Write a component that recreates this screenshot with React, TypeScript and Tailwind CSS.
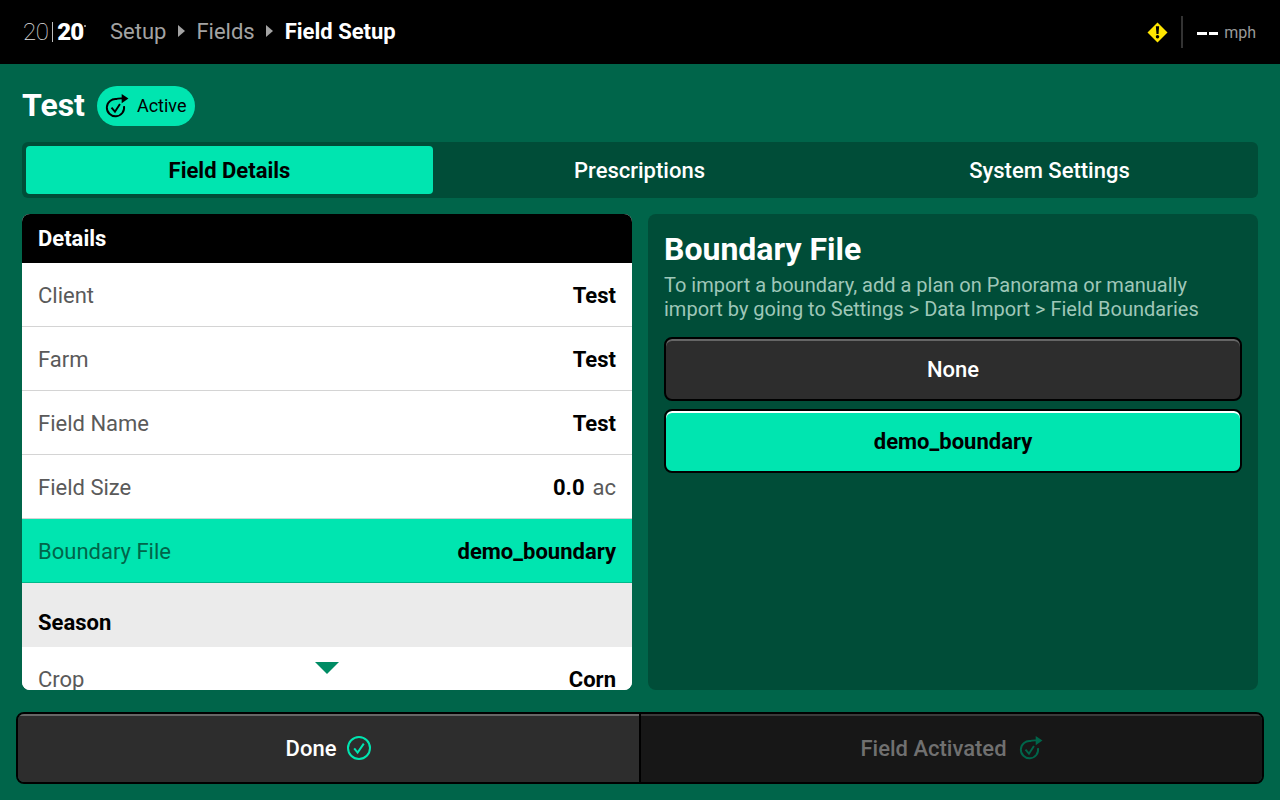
import type { ReactNode } from 'react';

function ActivateIcon({ className }: { className?: string }) {
	return (
		<svg viewBox="0 0 26 26" fill="none" className={className}>
			<path
				d="M20.800 12.600a9 9 0 1 1-7.400-7.300"
				stroke="currentColor"
				strokeWidth="2"
				fill="none"
			/>
			<path d="M12 5.300c2-.7 4.600-.8 7.400-.7" stroke="currentColor" strokeWidth="2" />
			<path d="M18.400 0l7 4.800-7 4.800z" fill="currentColor" />
			<path d="M7.800 14.200l3.600 4.200 5.200-8" stroke="currentColor" strokeWidth="2" />
		</svg>
	);
}

function CheckCircle({ className }: { className?: string }) {
	return (
		<svg viewBox="0 0 24 24" fill="none" className={className}>
			<circle cx="12" cy="12" r="11" stroke="currentColor" strokeWidth="2" />
			<path d="M7.200 12.400l3.400 4.200 6.200-9" stroke="currentColor" strokeWidth="2" />
		</svg>
	);
}

function Crumb({ children }: { children: ReactNode }) {
	return <span className="text-[22px] text-[#a3a3a3]">{children}</span>;
}

function CrumbArrow() {
	return <span className="mx-[11.5px] h-0 w-0 border-y-[6px] border-l-[7px] border-y-transparent border-l-[#a3a3a3]" />;
}

function Row({ label, value, unit, active }: { label: string; value: string; unit?: string; active?: boolean }) {
	return (
		<div
			className={
				active
					? 'flex h-16 shrink-0 items-center justify-between border-b border-[#00b98a] bg-[#00e5b0] px-4 pt-px text-[22px]'
					: 'flex h-16 shrink-0 items-center justify-between border-b border-[#d4d4d4] bg-white px-4 pt-px text-[22px]'
			}
		>
			<span className={active ? 'text-[#00654a]' : 'text-[#5a5a5a]'}>{label}</span>
			<span className="font-bold text-black">
				{value}
				{unit && <span className="ml-2 font-normal text-[#5a5a5a]">{unit}</span>}
			</span>
		</div>
	);
}

function Tab({ label, active }: { label: string; active?: boolean }) {
	return (
		<div
			className={
				active
					? 'flex flex-1 items-center justify-center rounded-[4px] bg-[#00e5b0] text-[22px] font-bold text-black'
					: 'flex flex-1 items-center justify-center text-[22px] font-medium text-white'
			}
		>
			{label}
		</div>
	);
}

export default function App() {
	return (
		<div className="flex h-[800px] w-[1280px] flex-col overflow-hidden bg-[#00654a] font-['Roboto',sans-serif]">
			<header className="flex h-16 shrink-0 items-center bg-black pl-[23px] pr-6">
				<div className="flex w-[87px] items-center text-[24px] leading-none text-white">
					<span className="font-thin tracking-[-0.5px] text-[#e5e5e5]">20</span>
					<span className="mx-[4px] h-[20px] w-px bg-[#bdbdbd]" />
					<span className="font-black tracking-[-1px]">20</span>
					<span className="mb-[13px] ml-px h-[2px] w-[2px] rounded-full bg-[#bdbdbd]" />
				</div>
				<div className="flex items-center pb-0.5">
					<Crumb>Setup</Crumb>
					<CrumbArrow />
					<Crumb>Fields</Crumb>
					<CrumbArrow />
					<span className="text-[22px] font-bold text-white">Field Setup</span>
				</div>
				<div className="ml-auto flex items-center">
					<svg viewBox="0 0 22 22" className="h-[21px] w-[21px]">
						<path d="M11 .5L21.500 11 11 21.500.5 11z" fill="#ffe600" />
						<path d="M9.300 4.500h3.400l-.6 8H9.900z" fill="#000" />
						<circle cx="11" cy="15.500" r="1.800" fill="#000" />
					</svg>
					<span className="ml-[13px] mr-[14px] h-8 w-0.5 bg-[#333333]" />
					<span className="mt-0.5 h-[3px] w-[10px] bg-white" />
					<span className="ml-0.5 mt-0.5 h-[3px] w-[9px] bg-white" />
					<span className="ml-[6px] mt-px text-[16px] text-[#9a9a9a]">mph</span>
				</div>
			</header>

			<div className="flex flex-1 flex-col px-[22px] pt-[22px]">
				<div className="flex h-10 items-center">
					<h1 className="pb-0.5 text-[32px] font-bold text-white">Test</h1>
					<div className="ml-3 flex h-10 items-center rounded-full bg-[#00e5b0] pl-[7px] pr-2">
						<ActivateIcon className="h-[25px] w-[25px] text-black" />
						<span className="ml-2 pb-0.5 text-[18px] text-black">Active</span>
					</div>
				</div>

				<div className="mt-4 flex h-14 gap-[3px] rounded-md bg-[#004d38] py-1 pl-1 pr-[5px]">
					<Tab label="Field Details" active />
					<Tab label="Prescriptions" />
					<Tab label="System Settings" />
				</div>

				<div className="mt-4 grid h-[476px] grid-cols-2 gap-4">
					<section className="relative flex min-w-0 flex-col overflow-hidden rounded-lg bg-white">
						<div className="flex h-[49px] shrink-0 items-center bg-black px-4 text-[22px] font-bold text-white">Details</div>
						<Row label="Client" value="Test" />
						<Row label="Farm" value="Test" />
						<Row label="Field Name" value="Test" />
						<Row label="Field Size" value="0.0" unit="ac" />
						<Row label="Boundary File" value="demo_boundary" active />
						<div className="flex h-16 shrink-0 items-end bg-[#ebebeb] px-4 pb-2 text-[22px] font-bold text-black">Season</div>
						<Row label="Crop" value="Corn" />
						<span className="absolute bottom-4 left-[293px] h-0 w-0 border-x-[12px] border-t-[12px] border-x-transparent border-t-[#008c64]" />
					</section>

					<section className="flex min-w-0 flex-col rounded-lg bg-[#004d38] px-4 pt-4">
						<h2 className="text-[32px] font-bold leading-[38px] text-white">Boundary File</h2>
						<p className="mt-[5px] text-[20px] leading-6 text-[#9fc7b8]">
							To import a boundary, add a plan on Panorama or manually
							<br />
							import by going to Settings &gt; Data Import &gt; Field Boundaries
						</p>
						<button className="mt-4 flex h-16 items-center justify-center rounded-lg border-2 border-black bg-[#2d2d2d] text-[22px] font-medium text-white shadow-[inset_0_2px_0_#666666]">
							None
						</button>
						<button className="mt-2 flex h-16 items-center justify-center rounded-lg border-2 border-black bg-[#00e5b0] text-[22px] font-bold text-black shadow-[inset_0_2px_0_#ffffff]">
							demo_boundary
						</button>
					</section>
				</div>
			</div>

			<footer className="mx-4 mb-4 flex h-[72px] shrink-0 overflow-hidden rounded-lg border-2 border-black">
				<button className="flex flex-1 items-center justify-center border-r-2 border-black bg-[#2d2d2d] text-[22px] font-medium text-white shadow-[inset_0_2px_0_#666666]">
					Done
					<CheckCircle className="ml-[11px] h-6 w-6 text-[#00e5b0]" />
				</button>
				<button className="flex flex-1 items-center justify-center bg-[#171717] text-[22px] font-medium text-[#707070] shadow-[inset_0_2px_0_#3a3a3a]">
					Field Activated
					<ActivateIcon className="ml-[11px] h-[25px] w-[25px] text-[#00654a]" />
				</button>
			</footer>
		</div>
	);
}
